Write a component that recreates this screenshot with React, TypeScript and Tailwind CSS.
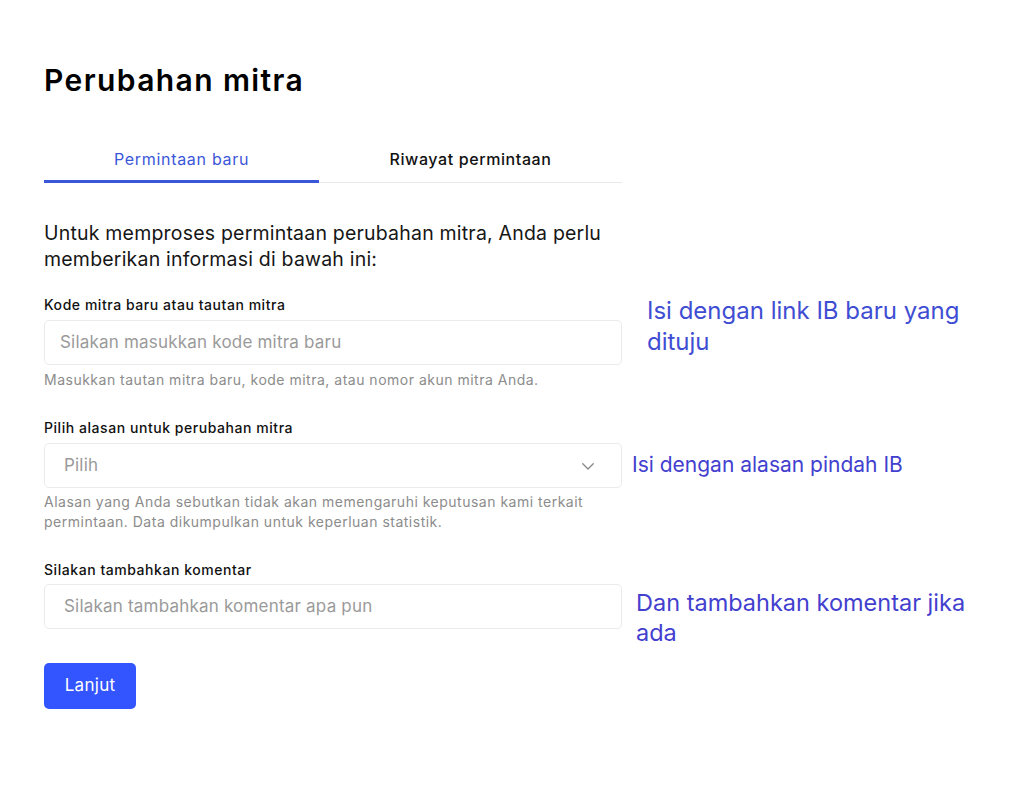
import React from "react";

const font = { fontFamily: "Inter, 'Noto Sans', sans-serif" };
const note = { fontFamily: "Inter, Roboto, sans-serif" };

function Chevron() {
  return (
    <svg width="18" height="18" viewBox="0 0 24 24" fill="none" stroke="#8a8a8a" strokeWidth="1.8" strokeLinecap="round" strokeLinejoin="round">
      <path d="M5 9l7 7 7-7" />
    </svg>
  );
}

export default function App() {
  return (
    <div className="min-h-[796px] w-[1024px] bg-white text-[#111]" style={font}>
      <div className="pl-[44px] pt-[62px]">
        <h1 className="text-[30px] font-semibold leading-[36px] tracking-[1.4px] text-black">Perubahan mitra</h1>

        <div className="mt-[51px] flex w-[578px] border-b border-[#e9e9ec]">
          <div className="-mb-px flex h-[34px] w-[275px] items-start justify-center border-b-[3px] border-[#3b57d9] text-[16px] leading-[20px] tracking-[0.7px] text-[#3b57d9]">
            Permintaan baru
          </div>
          <div className="flex h-[33px] flex-1 items-start justify-center text-[16px] font-medium leading-[20px] tracking-[0.6px] text-[#111]">
            Riwayat permintaan
          </div>
        </div>

        <p className="mt-[37px] w-[578px] text-[19.5px] leading-[26px] tracking-[0.2px] text-[#161616]">
          Untuk memproses permintaan perubahan mitra, Anda perlu memberikan informasi di bawah ini:
        </p>

        {/* Field 1 */}
        <div className="mt-[24px] flex items-start">
          <div className="w-[578px]">
            <div className="text-[14px] font-medium leading-[18px] tracking-[0.55px] text-[#111]">Kode mitra baru atau tautan mitra</div>
            <div className="mt-[6px] flex h-[45px] items-center rounded-[5px] border border-[#ebebee] px-[15px] text-[17px] tracking-[0.2px] text-[#9a9a9a]">
              Silakan masukkan kode mitra baru
            </div>
            <div className="mt-[6px] text-[14px] leading-[18px] tracking-[0.5px] text-[#8c8c8c]">
              Masukkan tautan mitra baru, kode mitra, atau nomor akun mitra Anda.
            </div>
          </div>
          <div className="ml-[25px] mt-[-1px] w-[340px] text-[24px] leading-[31px] text-[#3f4dd3]" style={note}>
            Isi dengan link IB baru yang dituju
          </div>
        </div>

        {/* Field 2 */}
        <div className="mt-[30px] flex items-start">
          <div className="w-[578px]">
            <div className="text-[14px] font-medium leading-[18px] tracking-[0.55px] text-[#111]">Pilih alasan untuk perubahan mitra</div>
            <div className="mt-[6px] flex h-[45px] items-center justify-between rounded-[5px] border border-[#ebebee] pl-[19px] pr-[24px] text-[17px] tracking-[0.2px] text-[#9a9a9a]">
              <span>Pilih</span>
              <Chevron />
            </div>
            <div className="mt-[4px] text-[14px] leading-[20px] tracking-[0.5px] text-[#8c8c8c]">
              Alasan yang Anda sebutkan tidak akan memengaruhi keputusan kami terkait permintaan. Data dikumpulkan untuk keperluan statistik.
            </div>
          </div>
          <div className="ml-[10px] mt-[32px] text-[21px] leading-[28px] text-[#4340cf]" style={note}>
            Isi dengan alasan pindah IB
          </div>
        </div>

        {/* Field 3 */}
        <div className="mt-[29px] flex items-start">
          <div className="w-[578px]">
            <div className="text-[14px] font-medium leading-[18px] tracking-[0.55px] text-[#111]">Silakan tambahkan komentar</div>
            <div className="mt-[5px] flex h-[45px] items-center rounded-[5px] border border-[#ebebee] px-[19px] text-[17px] tracking-[0.2px] text-[#9a9a9a]">
              Silakan tambahkan komentar apa pun
            </div>
          </div>
          <div className="mb-[-30px] ml-[14px] mt-[27px] w-[360px] text-[23.5px] leading-[30px] text-[#4340cf]" style={note}>
            Dan tambahkan komentar jika ada
          </div>
        </div>

        <button className="mt-[34px] h-[46px] w-[92px] rounded-[5px] bg-[#3355ff] text-[17px] tracking-[0.3px] text-white">
          Lanjut
        </button>
      </div>
    </div>
  );
}
